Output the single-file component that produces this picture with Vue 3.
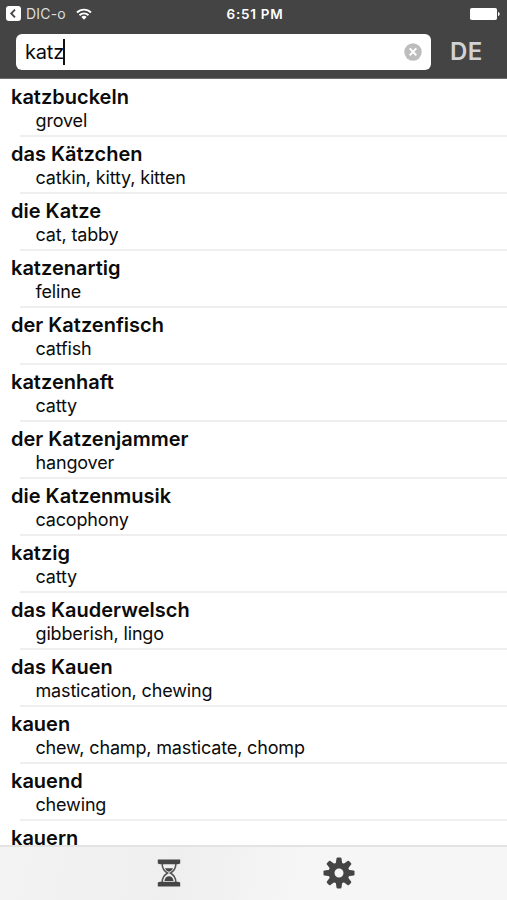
<template>
  <div class="app">
    <header class="header">
      <div class="status">
        <div class="status-left">
          <svg class="back" viewBox="0 0 15 15">
            <rect width="15" height="15" rx="3" fill="#fff" />
            <path d="M9 3.6 5.2 7.5 9 11.4" fill="none" stroke="#444" stroke-width="1.8" />
          </svg>
          <span class="back-label">DIC-o</span>
          <svg class="wifi" viewBox="0 0 16 12">
            <g fill="none" stroke="#fff" stroke-width="1.9">
              <path d="M1 4.5a10 10 0 0 1 14 0" />
              <path d="M3.5 7.2a6.4 6.4 0 0 1 9 0" />
            </g>
            <path d="M8 11.7 5.3 9a3.8 3.8 0 0 1 5.4 0z" fill="#fff" />
          </svg>
        </div>
        <span class="time">6:51 PM</span>
        <div class="status-right">
          <svg class="battery" viewBox="0 0 30 12">
            <rect width="27" height="12" rx="1.8" fill="#fff" />
            <path d="M28 4c2.2.6 2.2 3.4 0 4z" fill="#fff" />
          </svg>
        </div>
      </div>

      <div class="search-row">
        <div class="search">
          <span class="query">{{ query }}</span>
          <span class="caret"></span>
          <button class="clear" @click="query = ''">
            <svg viewBox="0 0 18 18">
              <circle cx="9" cy="9" r="8.7" fill="#bdbdbd" />
              <path d="m5.7 5.4 6.6 7M12.3 5.4l-6.6 7" stroke="#fff" stroke-width="2" />
            </svg>
          </button>
        </div>
        <button class="lang">DE</button>
      </div>
    </header>

    <!-- RESULTS -->
    <main class="results">
      <div v-for="entry in entries" :key="entry.word" class="entry">
        <div class="word">{{ entry.word }}</div>
        <div class="meaning">{{ entry.meaning }}</div>
      </div>
    </main>

    <!-- TAB BAR -->
    <nav class="tabs">
      <button class="tab">
        <svg class="hourglass" viewBox="0 0 24 28">
          <path d="M.8.500h22.400V4.500L21 5.300H3L.8 4.500zM.8 27.500h22.400V23.500L21 22.700H3L.8 23.500z" fill="#454545" />
          <path
            d="M5.200 5c0 5 2 7 5.300 9-3.300 2-5.300 4.500-5.300 9M18.800 5c0 5-2 7-5.300 9 3.300 2 5.300 4.500 5.300 9"
            fill="none" stroke="#555" stroke-width="1.600"
          />
          <path d="M8 9.300h8C15 11.500 13.500 12.400 12 12.800 10.500 12.400 9 11.500 8 9.300zM7.500 22c.2-3 2-4.800 4.500-4.800s4.300 1.800 4.500 4.800z" fill="#454545" />
        </svg>
      </button>
      <button class="tab">
        <svg class="gear" viewBox="-16 -16 32 32">
          <g fill="#454545">
            <path
              v-for="n in 8" :key="n"
              d="M-3.300-9-2.500-14.600Q-2.300-15.500-1.400-15.500H1.400Q2.300-15.500 2.500-14.600L3.300-9z"
              :transform="`rotate(${n * 45})`"
            />
          </g>
          <circle r="7.500" fill="none" stroke="#454545" stroke-width="6" />
        </svg>
      </button>
    </nav>
  </div>
</template>

<script setup>
import { ref } from 'vue'

const query = ref('katz')

const entries = ref([
  { word: 'katzbuckeln', meaning: 'grovel' },
  { word: 'das Kätzchen', meaning: 'catkin, kitty, kitten' },
  { word: 'die Katze', meaning: 'cat, tabby' },
  { word: 'katzenartig', meaning: 'feline' },
  { word: 'der Katzenfisch', meaning: 'catfish' },
  { word: 'katzenhaft', meaning: 'catty' },
  { word: 'der Katzenjammer', meaning: 'hangover' },
  { word: 'die Katzenmusik', meaning: 'cacophony' },
  { word: 'katzig', meaning: 'catty' },
  { word: 'das Kauderwelsch', meaning: 'gibberish, lingo' },
  { word: 'das Kauen', meaning: 'mastication, chewing' },
  { word: 'kauen', meaning: 'chew, champ, masticate, chomp' },
  { word: 'kauend', meaning: 'chewing' },
  { word: 'kauern', meaning: '' }
])
</script>

<style>
body {
  margin: 0;
  background: #fff;
}
</style>

<style scoped>
.app {
  display: flex;
  flex-direction: column;
  height: 100vh;
  overflow: hidden;
  font-family: Inter, "Liberation Sans", sans-serif;
  color: #0b0b0b;
}

button {
  border: none;
  padding: 0;
  background: none;
  font-family: inherit;
}

svg {
  display: block;
}

.header {
  flex: none;
  box-sizing: border-box;
  height: 79px;
  background: #444;
  border-bottom: 1px solid #6f6f6f;
}

.status {
  display: grid;
  grid-template-columns: 1fr auto 1fr;
  align-items: center;
  height: 27px;
  padding: 0 7px 0 6px;
  color: #fff;
}

.status-left {
  display: flex;
  align-items: center;
}

.back {
  width: 15px;
  height: 15px;
}

.back-label {
  margin-left: 5px;
  font-size: 14px;
  letter-spacing: 0.2px;
  color: #ddd;
}

.wifi {
  width: 16px;
  height: 12px;
  margin-left: 10px;
}

.time {
  padding-left: 4px;
  font-size: 13.5px;
  font-weight: 600;
  letter-spacing: 0.75px;
}

.status-right {
  display: flex;
  justify-content: flex-end;
}

.battery {
  width: 30px;
  height: 12px;
}

.search-row {
  display: flex;
  align-items: center;
  padding: 7px 0 0 16px;
}

.search {
  box-sizing: border-box;
  display: flex;
  align-items: center;
  width: 415px;
  height: 36px;
  padding: 0 9px;
  border-radius: 6px;
  background: #fff;
}

.query {
  font-size: 20px;
  letter-spacing: -0.2px;
}

.caret {
  width: 2px;
  height: 26px;
  margin-left: -1px;
  background: #111;
}

.clear {
  margin-left: auto;
}

.clear svg {
  width: 18px;
  height: 18px;
}

.lang {
  margin-left: 19px;
  font-size: 24px;
  font-weight: 600;
  line-height: 28px;
  letter-spacing: 0.3px;
  color: #d2d2d2;
}

.results {
  flex: 1;
  min-height: 0;
  overflow: hidden;
}

.entry {
  position: relative;
  box-sizing: border-box;
  height: 57px;
  padding: 6px 0 0 11px;
}

.entry::after {
  content: '';
  position: absolute;
  left: 20px;
  right: 0;
  bottom: -1px;
  height: 2px;
  background: #efefef;
}

.word {
  font-size: 20px;
  font-weight: 600;
  line-height: 24px;
}

.meaning {
  padding-left: 24.5px;
  font-size: 18px;
  line-height: 24px;
  letter-spacing: -0.16px;
}

.tabs {
  flex: none;
  box-sizing: border-box;
  display: flex;
  justify-content: center;
  height: 55px;
  padding-bottom: 2px;
  border-top: 2px solid #e3e3e3;
  background: linear-gradient(100deg, #f3f3f3 0%, #efefef 35%, #f3f3f3 50%, #f6f6f6 60%);
}

.tab {
  display: flex;
  align-items: center;
  justify-content: center;
  width: 170px;
}

.hourglass {
  width: 24px;
  height: 28px;
}

.gear {
  width: 32px;
  height: 32px;
}
</style>
